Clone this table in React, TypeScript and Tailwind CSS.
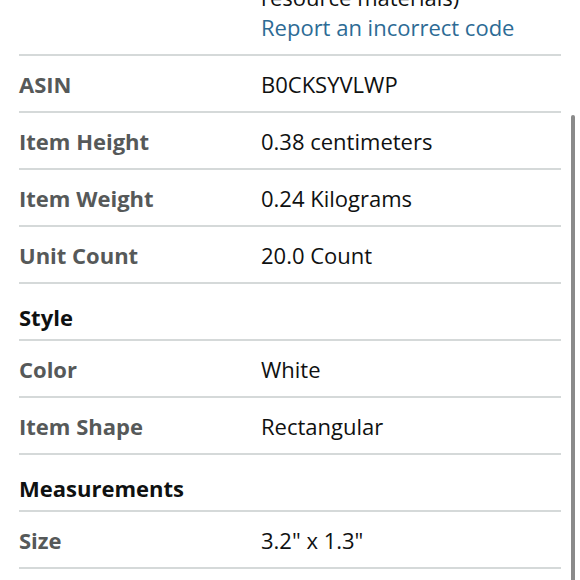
const rows: { label: string; value?: string; header?: boolean }[] = [
  { label: 'ASIN', value: 'B0CKSYVLWP' },
  { label: 'Item Height', value: '0.38 centimeters' },
  { label: 'Item Weight', value: '0.24 Kilograms' },
  { label: 'Unit Count', value: '20.0 Count' },
  { label: 'Style', header: true },
  { label: 'Color', value: 'White' },
  { label: 'Item Shape', value: 'Rectangular' },
  { label: 'Measurements', header: true },
  { label: 'Size', value: '3.2" x 1.3"' },
];

export default function App() {
  return (
    <div
      className="relative h-[580px] w-[580px] overflow-hidden bg-white text-[22px] leading-[30px] text-[#0f1111]"
      style={{ fontFamily: '"Open Sans", "Noto Sans", sans-serif' }}
    >
      <div className="ml-[19px] mr-[19px]">
        <div className="flex h-[56px] flex-col justify-end border-b-2 border-[#d5d9d9] pb-[12px] pl-[242px]">
          <div>resource materials)</div>
          <div className="text-[#2d6b95]">Report an incorrect code</div>
        </div>
        {rows.map((row) =>
          row.header ? (
            <div
              key={row.label}
              className="flex h-[57px] items-end border-b-2 border-[#d5d9d9] pb-[7px] font-bold text-[#0f1111]"
            >
              {row.label}
            </div>
          ) : (
            <div
              key={row.label}
              className="flex h-[57px] items-center border-b-2 border-[#d5d9d9]"
            >
              <div className="w-[242px] font-bold text-[#565959]">{row.label}</div>
              <div>{row.value}</div>
            </div>
          )
        )}
      </div>
      <div className="absolute right-[5px] top-[115px] h-[470px] w-[4px] rounded-t-full bg-[#8a8a8a]" />
    </div>
  );
}
